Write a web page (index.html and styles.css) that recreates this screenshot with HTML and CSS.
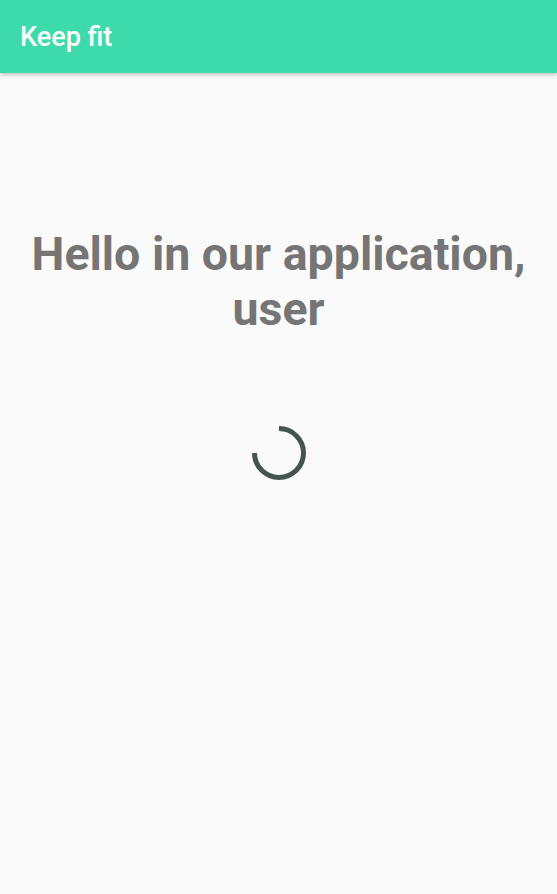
FILE: index.html
```html
<!DOCTYPE html>
<html>
<head>
<meta charset="utf-8">
<link rel="stylesheet" href="styles.css">
</head>
<body>
<header class="appbar"><span class="title">Keep fit</span></header>
<main class="content">
  <h1 class="greeting">Hello in our application, user</h1>
  <svg class="spinner" width="56" height="56" viewBox="0 0 56 56">
    <path d="M28 3.5 A24.5 24.5 0 1 1 3.5 28" fill="none" stroke="#44554f" stroke-width="5"/>
  </svg>
</main>
</body>
</html>
```
FILE: styles.css
```css
html, body { margin: 0; padding: 0; }
body {
  background: #fafafa;
  font-family: Roboto, "Noto Sans", sans-serif;
  width: 557px;
  height: 894px;
  overflow: hidden;
}
.appbar {
  height: 73px;
  background: #3ddbab;
  display: flex;
  align-items: center;
  padding-left: 20px;
  box-shadow: 0 2px 4px rgba(0,0,0,0.22);
  position: relative;
}
.title {
  color: #ffffff;
  font-size: 27px;
  font-weight: 500;
}
.content {
  display: flex;
  flex-direction: column;
  align-items: center;
}
.greeting {
  margin: 154px 0 0;
  text-align: center;
  font-size: 46.5px;
  line-height: 55px;
  font-weight: 700;
  color: #757575;
  padding: 0 16px;
}
.spinner {
  margin-top: 88px;
  display: block;
}
```
